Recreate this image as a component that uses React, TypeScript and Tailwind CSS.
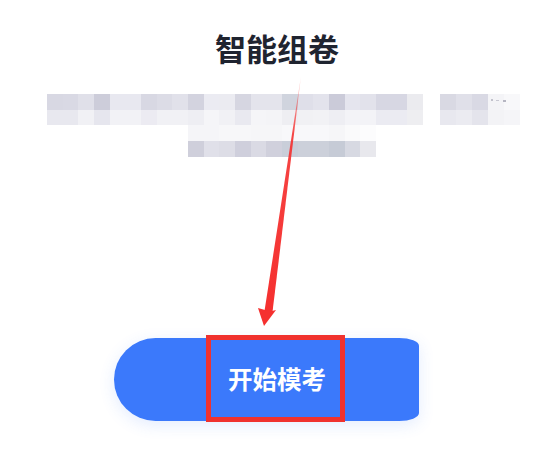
const row1 = [
  "bg-[#d8d8e3]", "bg-[#d9d9e4]", "bg-[#e0e0e9]", "bg-[#cdcdda]", "bg-[#e8e8f0]", "bg-[#e8e8f0]", "bg-[#d8d8e3]", "bg-[#dcdce6]",
  "bg-[#e1e1ea]", "bg-[#d3d3df]", "bg-[#ebebf2]", "bg-[#ebebf1]", "bg-[#d6d6e1]", "bg-[#e4e4ec]", "bg-[#e4e4ec]", "bg-[#d0d4de]",
  "bg-[#dfdfe9]", "bg-[#e3e3ec]", "bg-[#cbcbd9]", "bg-[#e5e5ee]", "bg-[#e2e2eb]", "bg-[#d7d7e3]", "bg-[#d7d7e3]", "bg-[#ebebef]",
];
const row2 = [
  "bg-[#e8e8ef]", "bg-[#e8e8ef]", "bg-[#f1f1f5]", "bg-[#e6e6ee]", "bg-[#f2f2f6]", "bg-[#f2f2f6]", "bg-[#ecebf2]", "bg-[#f1f1f5]",
  "bg-[#f1f1f5]", "bg-[#eeeef3]", "bg-[#f5f5f8]", "bg-[#f1f1f5]", "bg-[#e9e9f0]", "bg-[#f5f5f8]", "bg-[#f4f4f7]", "bg-[#eeeef2]",
  "bg-[#f1f1f4]", "bg-[#f2f2f5]", "bg-[#eeeef3]", "bg-[#f3f3f7]", "bg-[#f3f3f7]", "bg-[#ebebf2]", "bg-[#ebebf2]", "bg-[#eeeef1]",
];
const side1 = ["bg-[#d9d9e3]", "bg-[#e0e0e9]", "bg-[#d9d9e4]", "bg-[#f4f4f7]", "bg-[#f8f8fa]"];
const side2 = ["bg-[#e8e8ef]", "bg-[#ebebf1]", "bg-[#e4e4ec]", "bg-[#f3f3f6]", "bg-[#f5f5f8]"];
const row3 = [
  "bg-[#f5f5f8]", "bg-[#f5f5f8]", "bg-[#f7f7f9]", "bg-[#f7f7f9]", "bg-[#f6f6f8]", "bg-[#f6f6f8]",
  "bg-[#f8f8fa]", "bg-[#f8f8fa]", "bg-[#f8f8fa]", "bg-[#f6f6f8]", "bg-[#fafafb]", "bg-[#fcfcfd]",
];
const row4 = [
  "bg-[#cfcfdb]", "bg-[#e0e0e9]", "bg-[#dddde6]", "bg-[#cfcfdc]", "bg-[#dadae4]", "bg-[#d0d0dc]",
  "bg-[#c9ced9]", "bg-[#ccd0da]", "bg-[#ccd0da]", "bg-[#c6cbd6]", "bg-[#d7d9e2]", "bg-[#e8e8ed]",
];

function Cells({ colors, className }: { colors: string[]; className: string }) {
  return (
    <div className={`flex ${className}`}>
      {colors.map((c, i) => (
        <div key={i} className={`flex-1 ${c}`} />
      ))}
    </div>
  );
}

export default function App() {
  return (
    <div
      className="relative flex h-[455px] w-[550px] flex-col overflow-hidden bg-white"
      style={{ fontFamily: '"Noto Sans CJK SC", "Noto Sans", sans-serif' }}
    >
      <h1 className="mt-[26px] ml-[215px] text-[31px] leading-[44px] font-bold text-[#1f2430]">智能组卷</h1>

      <div className="mt-[24px] ml-[47px] flex gap-[17px]">
        <div className="flex w-[376px] flex-col">
          <Cells colors={row1} className="h-[16px]" />
          <Cells colors={row2} className="h-[15px]" />
        </div>
        <div className="flex w-[80px] flex-col">
          <Cells colors={side1} className="h-[16px]" />
          <Cells colors={side2} className="h-[15px]" />
        </div>
      </div>

      <div className="ml-[188px] flex w-[188px] flex-col">
        <Cells colors={row3} className="h-[16px]" />
        <Cells colors={row4} className="h-[16px]" />
      </div>

      <div className="mt-[181px] ml-[114px] flex h-[83px] w-[305px] rounded-[42px_20px_20px_42px/42px_8px_8px_42px] bg-[#3b79fb] pl-[92px] shadow-[0_4px_16px_rgba(59,121,251,0.14)]">
        <div className="-mt-[3px] -mb-[1px] flex w-[139px] items-center justify-center border-[5px] border-[#f0322e] pt-[2px] pl-[3px] text-[24.5px] font-bold text-white">
          开始模考
        </div>
      </div>

      <svg className="absolute top-0 left-0" width="550" height="455" viewBox="0 0 550 455">
        <defs>
          <linearGradient id="tail" x1="301" y1="76" x2="268" y2="310" gradientUnits="userSpaceOnUse">
            <stop offset="0" stopColor="#f5302f" stopOpacity="0.15" />
            <stop offset="0.25" stopColor="#f5302f" stopOpacity="0.9" />
            <stop offset="1" stopColor="#f5302f" />
          </linearGradient>
        </defs>
        <polygon points="301,76 272.5,312 264.5,311" fill="url(#tail)" />
        <polygon points="264,326 258,308 265,310 272,311 276,310" fill="#f5302f" />
        <rect x="491" y="99" width="2" height="2" fill="#c2c2cc" />
        <rect x="496" y="100" width="3" height="1" fill="#c8c8d2" />
        <rect x="503" y="100" width="3" height="2" fill="#b6b6c2" />
      </svg>
    </div>
  );
}
